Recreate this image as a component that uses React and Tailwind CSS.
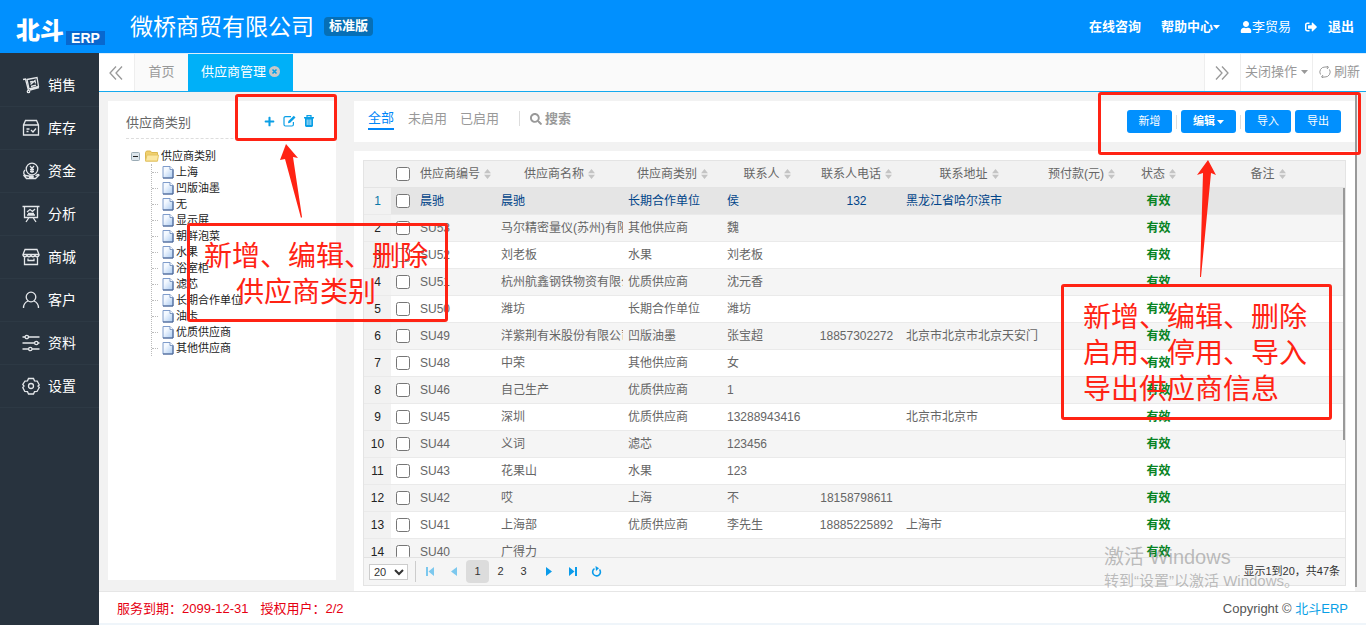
import React from 'react';
import { FaPlus, FaUser, FaSearch, FaSignOutAlt } from 'react-icons/fa';

const menuItems = [
  {
    name: '销售',
    icon: (
      <>
        <path d="M1 3.5l2.5-.5 3 11.5" />
        <circle cx="6.5" cy="15.5" r="1.2" />
        <path d="M5 3.500l10-2 1.500 9-9.500 2.500zM8 14l9-2.500M8 6l3-.5M8.500 8.500L13 4.500l.5 3M9 10.500l5-1.300" />
      </>
    ),
  },
  {
    name: '库存',
    icon: (
      <>
        <path d="M1.500 6v10h15V6l-2-4.500h-11zM1.500 6h15" />
        <path d="M4.500 10h3M4.500 12.500h2M9 11l2 2 3-3.500" />
      </>
    ),
  },
  {
    name: '资金',
    icon: (
      <>
        <circle cx="10" cy="7" r="5.800" />
        <path d="M8 4l2 2.500L12 4M10 6.500v4.500M8 7.500h4M8 9.500h4" />
        <path d="M3 8c-2 2-1.500 4.500.5 5.500l3 .5h4c1 0 1 1.500 0 1.500H7M1.500 13l3 3.500h9l3.500-3.500c-.5-1-2-.5-3.500.8" />
      </>
    ),
  },
  {
    name: '分析',
    icon: (
      <>
        <path d="M.5 1.500h17M2.500 1.500v11h13v-11M7 12.500l-3 4.500M11 12.500l3 4.500" />
        <path d="M5 7l3-2.500 2.500 2L13 4M5 10h8M6 8.500h6" />
      </>
    ),
  },
  {
    name: '商城',
    icon: (
      <>
        <path d="M3 1.500h12l2 5h-16zM1 6.500c0 3 4 3 4 0 0 3 4 3 4 0 0 3 4 3 4 0 0 3 4 3 4 0M2.500 9.500v7h13v-7" />
        <path d="M6 10.500v2h6v-2" />
      </>
    ),
  },
  {
    name: '客户',
    icon: (
      <>
        <circle cx="9" cy="6" r="4.800" />
        <path d="M1.500 17c0-4 2-6 4.500-7M16.500 17c0-4-2-6-4.500-7" />
      </>
    ),
  },
  {
    name: '资料',
    icon: (
      <>
        <path d="M.5 3H3M6.500 3h11M.5 9h12M16 9h1.500M.5 15h6M10 15h7.500" />
        <circle cx="4.800" cy="3" r="1.700" />
        <circle cx="14.300" cy="9" r="1.700" />
        <circle cx="8.300" cy="15" r="1.700" />
      </>
    ),
  },
  {
    name: '设置',
    icon: (
      <>
        <path d="M6.500 1.500h5l1 2.300 2.700.2L17.300 8l-1.300 1 1.300 1.500-2.300 4-2.500.2-1 2.300h-5l-1-2.300-2.700-.2L.8 10.500 2 9 .8 7.500 3 4l2.500-.2z" />
        <circle cx="9" cy="9" r="2.500" />
      </>
    ),
  },
];

const categories = [
  '上海', '凹版油墨', '无', '显示屏', '朝鲜泡菜', '水果',
  '浴室柜', '滤芯', '长期合作单位', '油卡', '优质供应商', '其他供应商',
];

const columns = ['供应商编号', '供应商名称', '供应商类别', '联系人', '联系人电话', '联系地址', '预付款(元)', '状态', '备注'];

const suppliers = [
  { code: '晨驰', name: '晨驰', type: '长期合作单位', contact: '侯', phone: '132', address: '黑龙江省哈尔滨市' },
  { code: 'SU53', name: '马尔精密量仪(苏州)有限公司', type: '其他供应商', contact: '魏' },
  { code: 'SU52', name: '刘老板', type: '水果', contact: '刘老板' },
  { code: 'SU51', name: '杭州航鑫钢铁物资有限公司', type: '优质供应商', contact: '沈元香' },
  { code: 'SU50', name: '潍坊', type: '长期合作单位', contact: '潍坊' },
  { code: 'SU49', name: '洋紫荆有米股份有限公司', type: '凹版油墨', contact: '张宝超', phone: '18857302272', address: '北京市北京市北京天安门' },
  { code: 'SU48', name: '中荣', type: '其他供应商', contact: '女' },
  { code: 'SU46', name: '自己生产', type: '优质供应商', contact: '1' },
  { code: 'SU45', name: '深圳', type: '优质供应商', contact: '13288943416', address: '北京市北京市' },
  { code: 'SU44', name: '义词', type: '滤芯', contact: '123456' },
  { code: 'SU43', name: '花果山', type: '水果', contact: '123' },
  { code: 'SU42', name: '哎', type: '上海', contact: '不', phone: '18158798611' },
  { code: 'SU41', name: '上海部', type: '优质供应商', contact: '李先生', phone: '18885225892', address: '上海市' },
  { code: 'SU40', name: '广得力', type: '', contact: '' },
];

const Caret = () => (
  <svg className="w-[7px] h-1" viewBox="0 0 7 4" fill="currentColor"><path d="M0 0h7L3.500 4z" /></svg>
);

const SortIcon = () => (
  <svg className="w-[7px] h-[10px] text-[#c4c4c4]" viewBox="0 0 7 10" fill="currentColor">
    <path d="M3.500 0L7 4.300H0zM3.500 10L0 5.700h7z" />
  </svg>
);

const DoubleChevron = ({ right }) => (
  <svg className="w-[14px] h-[14px]" viewBox="0 0 14 14" fill="none" stroke="currentColor" strokeWidth="1.300">
    {right ? <path d="M1 .5L7 7 1 13.500M7 .5L13 7l-6 6.500" /> : <path d="M7 .5L1 7l6 6.500M13 .5L7 7l6 6.500" />}
  </svg>
);

const FileIcon = () => (
  <svg className="w-3 h-[14px]" viewBox="0 0 12 14">
    <defs>
      <linearGradient id="page" x1="0" y1="0" x2="1" y2="1">
        <stop offset="0.300" stopColor="#f4f9ff" />
        <stop offset="1" stopColor="#a9c9f0" />
      </linearGradient>
    </defs>
    <path d="M1 1.500h7L11 4.500v8.500H1z" fill="url(#page)" stroke="#7f9ccb" />
    <path d="M11 4.500v8.500H1" fill="none" stroke="#46608f" />
    <path d="M8 1.500v3h3" fill="#fff" stroke="#6485b8" strokeWidth=".8" />
  </svg>
);

function Header() {
  return (
    <header className="flex h-[53px] shrink-0 items-center bg-[#0190fe] text-white">
      <a href="#" className="flex w-[130px] items-end pl-4 pt-2">
        <span className="text-[24px] leading-7 font-black">北斗</span>
        <span className="ml-[2px] h-[14px] w-[39px] bg-[#0868cf] text-center text-[14px] leading-[14px] font-bold">ERP</span>
      </a>
      <h1 className="text-[23px] leading-8">微桥商贸有限公司</h1>
      <span className="ml-[10px] h-[19px] rounded-sm bg-[#066fb6] px-[5px] text-[13px] leading-[18px] font-bold">标准版</span>
      <nav className="ml-auto flex items-center pr-3 text-[13px] font-bold">
        <a href="#">在线咨询</a>
        <a href="#" className="ml-5 flex items-center">帮助中心<Caret /></a>
        <a href="#" className="ml-5 flex items-center font-normal"><FaUser className="size-3" />李贸易</a>
        <a href="#" className="ml-[14px] flex items-center gap-[11px]"><FaSignOutAlt className="size-3" />退出</a>
      </nav>
    </header>
  );
}

function SideMenu() {
  return (
    <aside className="w-[99px] shrink-0 bg-[#28333e] pt-[11px]">
      {menuItems.map((item) => (
        <a key={item.name} href="#" className="flex h-[43px] items-center gap-2 border-b border-[#2d3944] pl-[22px] text-[14px] text-white">
          <svg className="size-[18px]" viewBox="0 0 18 18" fill="none" stroke="#e4e7ea" strokeWidth="1.300">{item.icon}</svg>
          {item.name}
        </a>
      ))}
    </aside>
  );
}

function TabBar() {
  return (
    <div className="flex h-[39px] shrink-0 border-y border-t-[#dceefb] border-b-[#14a9ee] bg-[#fafafa] text-[13px] text-[#999]">
      <button className="w-9 border-r border-[#eee] bg-white pl-[10px]"><DoubleChevron /></button>
      <button className="w-[53px] pb-[2px]">首页</button>
      <button className="flex w-[105px] items-center justify-center gap-[3px] bg-[#00b0f8] pb-[2px] text-white">
        供应商管理
        <svg className="size-[11px]" viewBox="0 0 11 11">
          <circle cx="5.500" cy="5.500" r="5.500" fill="#c8c8c8" />
          <path d="M3.500 3.500l4 4M7.500 3.500l-4 4" stroke="#00a0e8" strokeWidth="1.600" />
        </svg>
      </button>
      <div className="ml-auto flex bg-white">
        <button className="w-9 border-l border-[#eee] pl-[10px]"><DoubleChevron right /></button>
        <button className="flex w-[72px] items-center justify-center gap-1 border-l border-[#eee] pb-[2px]">关闭操作<Caret /></button>
        <button className="flex w-[54px] items-center justify-center gap-[3px] border-l border-[#eee] pb-[2px]">
          <svg className="size-3" viewBox="0 0 12 12" fill="none" stroke="currentColor">
            <path d="M1.500 8.500A5 5 0 0 1 6 1h3M10.500 3.500A5 5 0 0 1 6 11H3M7.500 0l2 1-1.500 2M4.500 12l-2-1 1.500-2" />
          </svg>
          刷新
        </button>
      </div>
    </div>
  );
}

function CategoryPanel() {
  return (
    <section className="mt-[9px] mb-[11px] w-[228px] shrink-0 bg-white px-[18px]">
      <div className="flex h-[38px] items-center border-b border-dashed border-[#ddd] pt-[6px] pr-1">
        <h2 className="text-[13px] text-[#666]">供应商类别</h2>
        <div className="ml-auto flex gap-2 pb-[3px] text-[#0a9fe6]">
          <button aria-label="新增"><FaPlus className="size-[11px]" /></button>
          <button aria-label="编辑">
            <svg className="h-3 w-[13px]" viewBox="0 0 13 12" fill="none" stroke="currentColor" strokeWidth="1.200">
              <path d="M8 1.600H2.500A1.500 1.500 0 0 0 1 3.100v6.400A1.500 1.500 0 0 0 2.500 11h6.400a1.500 1.500 0 0 0 1.500-1.500V7" />
              <path d="M5 8.300l.4-2.300L10.800.7l1.700 1.700L7.200 7.800z" fill="currentColor" stroke="none" />
            </svg>
          </button>
          <button aria-label="删除">
            <svg className="h-3 w-[10px]" viewBox="0 0 10 12" fill="none" stroke="currentColor">
              <path d="M3 2.500V.7h4v1.800" strokeWidth="1.200" />
              <path d="M0 2h10v1.500H9V11l-1 1H2l-1-1V3.500H0z" fill="currentColor" stroke="none" />
              <path d="M3.200 4.500v5.500M5 4.500v5.500M6.800 4.500v5.500" stroke="#fff" strokeWidth=".7" />
            </svg>
          </button>
        </div>
      </div>
      <div className="pt-[9px] pl-[5px] text-[11px] leading-4 text-[#222]">
        <div className="flex items-center">
          <svg className="size-[9px]" viewBox="0 0 9 9"><rect x=".5" y=".5" width="8" height="8" rx="1" fill="#dde6ec" stroke="#9aabb5" /><path d="M2 4.500h5" stroke="#222" /></svg>
          <svg className="ml-[5px] mr-[2px] h-3 w-[14px]" viewBox="0 0 14 12"><path d="M.5 2.500l1-1.500h4l1 1.500h6v8.500H.5z" fill="#f0cf6d" stroke="#dcb850" /><path d="M.5 11L2 5h11.500l-1 6z" fill="#fbe7a2" stroke="#e4c463" /></svg>
          供应商类别
        </div>
        <ul className="ml-5 border-l border-dotted border-[#bbb]">
          {categories.map((name) => (
            <li key={name} className="flex h-4 items-center">
              <span className="mr-1 w-[6px] border-t border-dotted border-[#bbb]" />
              <FileIcon />
              <span className="ml-[2px]">{name}</span>
            </li>
          ))}
        </ul>
      </div>
    </section>
  );
}

function Toolbar() {
  const btn = 'h-[23px] rounded-[3px] bg-[#0190fe] text-[11px] text-white';
  return (
    <div className="flex h-[41px] shrink-0 items-center bg-white pr-[14px] pl-[14px] text-[13px] text-[#999]">
      <div className="flex items-center pb-[6px]">
        <a href="#" className="border-b-2 border-[#0186f8] leading-5 text-[#0186f8]">全部</a>
        <a href="#" className="ml-[14px]">未启用</a>
        <a href="#" className="ml-[13px]">已启用</a>
        <span className="ml-5 h-[15px] w-px bg-[#ddd]" />
        <button className="ml-[10px] flex items-center gap-[3px] font-bold"><FaSearch className="size-3" />搜索</button>
      </div>
      <div className="ml-auto flex items-center">
        <button className={`${btn} w-[45px]`}>新增</button>
        <span className="mx-1 h-[14px] w-px bg-[#ddd]" />
        <button className={`${btn} flex w-[55px] items-center justify-center gap-[2px] font-bold`}>编辑<Caret /></button>
        <span className="mx-1 h-[14px] w-px bg-[#ddd]" />
        <button className={`${btn} w-[46px]`}>导入</button>
        <button className={`${btn} ml-1 w-[46px]`}>导出</button>
      </div>
    </div>
  );
}

function SupplierTable() {
  return (
    <div className="relative min-h-0 flex-1 overflow-hidden">
      <table className="w-full table-fixed text-[12px] text-[#666]">
        <colgroup>
          <col className="w-[27px]" />
          <col className="w-[24px]" />
          <col className="w-[81px]" />
          <col className="w-[127px]" />
          <col className="w-[99px]" />
          <col className="w-[90px]" />
          <col className="w-[89px]" />
          <col className="w-[136px]" />
          <col className="w-[89px]" />
          <col className="w-[65px]" />
          <col />
        </colgroup>
        <thead>
          <tr className="h-[26px] border-b border-[#e4e4e4] bg-[#f2f2f2]">
            <th />
            <th><input type="checkbox" aria-label="全选" className="mx-auto block size-[14px]" /></th>
            {columns.map((name) => (
              <th key={name} className="p-0 font-normal">
                <span className="flex items-center justify-center gap-1">{name}<SortIcon /></span>
              </th>
            ))}
          </tr>
        </thead>
        <tbody>
          {suppliers.map((row, index) => (
            <tr
              key={row.code}
              className={`h-[27px] border-b border-[#eaeaea] whitespace-nowrap ${index === 0 ? 'bg-[#e5e5e5] text-[#004489]' : 'even:bg-[#f5f5f5]'}`}
            >
              <td className={`bg-[#f2f2f2] text-center ${index === 0 ? 'text-[#0a78a8]' : 'text-[#222]'}`}>{index + 1}</td>
              <td><input type="checkbox" aria-label={row.code} className="mx-auto block size-[14px]" /></td>
              <td className="overflow-hidden px-[5px]">{row.code}</td>
              <td className="pl-[5px]"><div className="overflow-hidden">{row.name}</div></td>
              <td className="px-[5px]">{row.type}</td>
              <td className="px-[5px]">{row.contact}</td>
              <td className="text-center">{row.phone}</td>
              <td className="px-[5px]">{row.address}</td>
              <td />
              <td className="text-center font-bold text-[#078323]">有效</td>
              <td />
            </tr>
          ))}
        </tbody>
      </table>
      <div className="absolute top-[27px] right-0 h-[252px] w-[2px] bg-[#999]" />
    </div>
  );
}

function Pager() {
  const pageBtn = 'size-[23px] rounded';
  return (
    <div className="flex h-7 shrink-0 items-center border-t border-[#e2e2e2] bg-[#f5f5f5] px-[5px] text-[11px] text-[#333]">
      <select aria-label="每页条数" className="h-4 w-[39px] border border-[#ccc] bg-white text-[11px] leading-3">
        <option>20</option>
      </select>
      <span className="ml-[7px] h-[21px] w-px bg-[#ccc]" />
      <button aria-label="首页" className="ml-[10px] text-[#7cc8ee]">
        <svg className="size-[9px]" viewBox="0 0 9 9" fill="currentColor"><path d="M0 0h2v9H0zM8 0v9L2.500 4.500z" /></svg>
      </button>
      <button aria-label="上一页" className="mr-2 ml-4 text-[#7cc8ee]">
        <svg className="h-[9px] w-[7px]" viewBox="0 0 7 9" fill="currentColor"><path d="M6 0v9L0 4.500z" /></svg>
      </button>
      <button className={`${pageBtn} bg-[#dcdcdc]`}>1</button>
      <button className={pageBtn}>2</button>
      <button className={pageBtn}>3</button>
      <button aria-label="下一页" className="ml-[10px] text-[#0a9bea]">
        <svg className="h-[9px] w-[7px]" viewBox="0 0 7 9" fill="currentColor"><path d="M1 0v9l6-4.500z" /></svg>
      </button>
      <button aria-label="末页" className="ml-4 text-[#0a9bea]">
        <svg className="size-[9px]" viewBox="0 0 9 9" fill="currentColor"><path d="M7 0h2v9H7zM1 0v9l5.500-4.500z" /></svg>
      </button>
      <button aria-label="刷新" className="ml-[14px] text-[#0a9bea]">
        <svg className="size-[11px]" viewBox="0 0 11 11" fill="none" stroke="currentColor" strokeWidth="1.600">
          <path d="M3.500 2.600a3.900 3.900 0 1 0 5 .8" /><path d="M4.500 0l3.500 2.300L5 5z" fill="currentColor" stroke="none" />
        </svg>
      </button>
      <span className="ml-auto">显示1到20，共47条</span>
    </div>
  );
}

// red hint boxes and arrows drawn on top of the page
function Hints() {
  const box = 'absolute rounded-[3px] border-[3px] border-[#ff2314]';
  return (
    <div className="pointer-events-none absolute inset-0 text-[28px] leading-9 text-[#ff2314]">
      <div className={`${box} top-[94px] left-[235px] h-[47px] w-[102px]`} />
      <svg className="absolute top-[144px] left-[279px] h-[74px] w-[24px]" viewBox="0 0 24 74" fill="#ff2314">
        <path d="M7 0l12 14-5-1 9 60-1 1L6 15l-5 1z" />
      </svg>
      <div className={`${box} top-[223px] left-[187px] h-[99px] w-[261px] pt-[13px] pl-[14px]`}>
        <p>新增、编辑、删除</p>
        <p className="pl-8">供应商类别</p>
      </div>
      <div className={`${box} top-[92px] right-[5px] h-[63px] w-[263px]`} />
      <svg className="absolute top-[160px] right-[149px] h-[117px] w-[20px]" viewBox="0 0 20 117" fill="#ff2314">
        <path d="M11 0l8 15-5-2-10 104H3L6 13l-6 2z" />
      </svg>
      <div className={`${box} top-[284px] right-[34px] h-[136px] w-[271px] pt-[13px] pl-[19px]`}>
        <p>新增、编辑、删除</p>
        <p>启用、停用、导入</p>
        <p>导出供应商信息</p>
      </div>
      <div className="absolute right-[68px] bottom-[32px] w-[194px] whitespace-nowrap text-[#8888888c]">
        <p className="text-[20px] leading-6">激活 Windows</p>
        <p className="text-[15px] leading-6">转到“设置”以激活 Windows。</p>
      </div>
    </div>
  );
}

export default function App() {
  return (
    <div className="relative flex h-screen flex-col overflow-hidden bg-[#f2f2f2] font-['Liberation_Sans','Noto_Sans_CJK_SC',sans-serif]">
      <Header />
      <div className="flex min-h-0 flex-1">
        <SideMenu />
        <div className="flex min-w-0 flex-1 flex-col">
          <TabBar />
          <main className="flex min-h-0 flex-1 pl-[9px]">
            <CategoryPanel />
            <div className="ml-[18px] flex min-w-0 flex-1 flex-col pt-[9px]">
              <Toolbar />
              <div className="mt-[9px] flex min-h-0 flex-1 flex-col bg-white p-[9px] pb-[5px]">
                <div className="flex min-h-0 flex-1 flex-col border border-[#e4e4e4]">
                  <SupplierTable />
                  <Pager />
                </div>
              </div>
            </div>
            <div className="mt-[2px] mr-[9px] mb-1 w-[2px] bg-[#999]" />
          </main>
          <footer className="flex h-[34px] shrink-0 items-center border-t border-b-2 border-[#e6e6e6] border-b-[#eff5fa] bg-white px-[18px] pt-[2px] text-[13px]">
            <span className="text-[#e60012]">服务到期：2099-12-31</span>
            <span className="ml-3 text-[#e60012]">授权用户：2/2</span>
            <span className="ml-auto text-[#555]">Copyright © <a href="#" className="text-[#0a9fe6]">北斗ERP</a></span>
          </footer>
        </div>
      </div>
      <Hints />
    </div>
  );
}
